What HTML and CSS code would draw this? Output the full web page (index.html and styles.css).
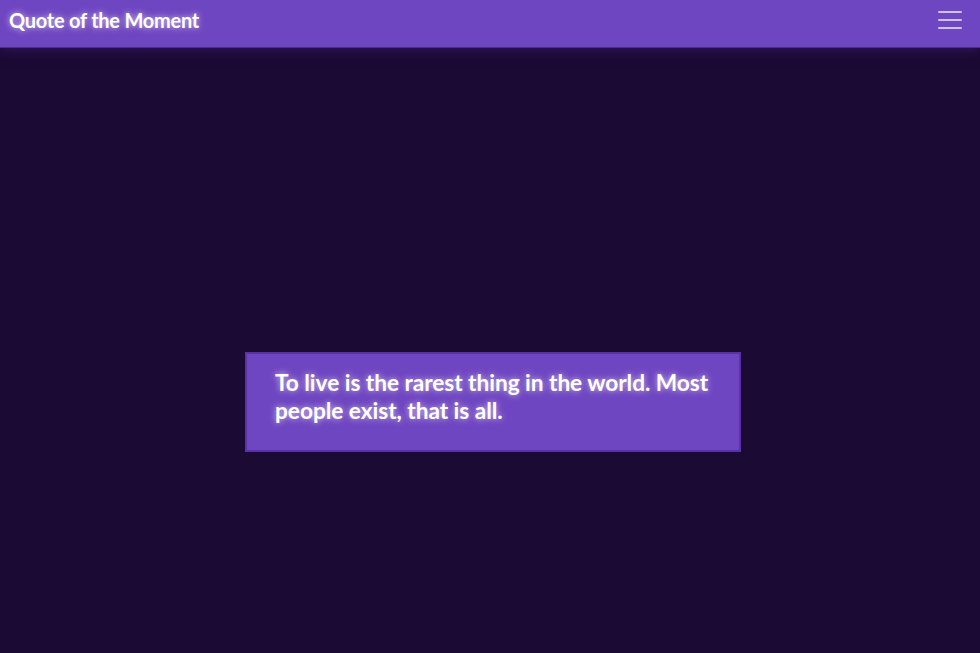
FILE: index.html
```html
<!DOCTYPE html>
<html lang="en">
<head>
<meta charset="utf-8">
<title>Quote of the Moment</title>
<link rel="stylesheet" href="styles.css">
</head>
<body>
<header class="topbar">
  <h1 class="title">Quote of the Moment</h1>
  <button class="menu" aria-label="Menu">
    <span class="bar"></span><span class="bar"></span><span class="bar"></span>
  </button>
</header>
<main class="stage">
  <div class="quote-card">
    <p class="quote">To live is the rarest thing in the world. Most people exist, that is all.</p>
  </div>
</main>
</body>
</html>
```
FILE: styles.css
```css
* { box-sizing: border-box; }
html, body { margin: 0; height: 100%; }
body {
  background: #1b0a33;
  font-family: Lato, "Open Sans", sans-serif;
  color: #fff;
  overflow: hidden;
}
.topbar {
  height: 48px;
  background: #6f46c1;
  display: flex;
  align-items: center;
  justify-content: space-between;
  padding: 0 9px;
  border-bottom: 1px solid #4a2d85;
  box-shadow: 0 2px 12px rgba(60, 30, 120, 0.6);
  position: relative;
  z-index: 1;
}
.title {
  margin: 0;
  font-size: 20px;
  line-height: 24px;
  font-weight: 700;
  letter-spacing: -0.25px;
  color: #fff;
  text-shadow: 0 0 6px rgba(255, 255, 255, 0.7);
  position: relative;
  top: -4px;
}
.menu {
  background: none;
  border: 0;
  padding: 0;
  width: 24px;
  height: 18px;
  display: flex;
  flex-direction: column;
  justify-content: space-between;
  margin-right: 9px;
  position: relative;
  top: -4px;
}
.bar {
  display: block;
  height: 2px;
  width: 24px;
  background: #cfc0ec;
  border-radius: 1px;
}
.stage {
  display: flex;
  justify-content: center;
  padding-top: 304px;
  padding-left: 6px;
}
.quote-card {
  width: 496px;
  background: #6f46c1;
  border: 2px solid #5733a6;
  padding: 15px 20px 25px 28px;
}
.quote {
  margin: 0;
  font-size: 22.7px;
  font-weight: 700;
  line-height: 28px;
  letter-spacing: -0.05px;
  color: #fff;
  text-shadow: 0 0 6px rgba(255, 255, 255, 0.7);
}
```
